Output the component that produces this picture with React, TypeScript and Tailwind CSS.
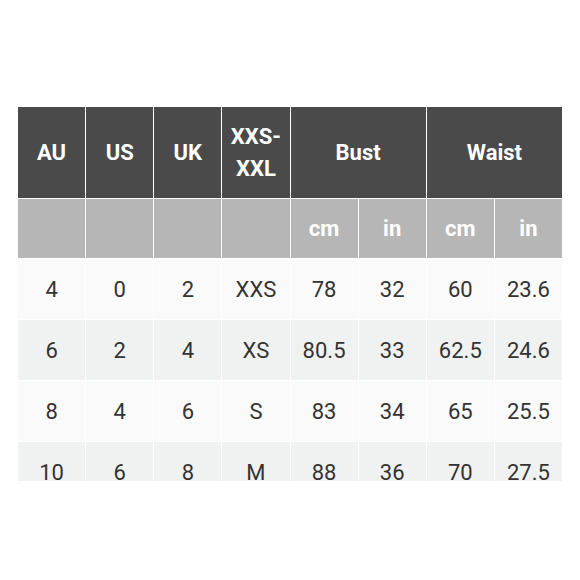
import React from 'react';

const rows = [
  ['4', '0', '2', 'XXS', '78', '32', '60', '23.6'],
  ['6', '2', '4', 'XS', '80.5', '33', '62.5', '24.6'],
  ['8', '4', '6', 'S', '83', '34', '65', '25.5'],
  ['10', '6', '8', 'M', '88', '36', '70', '27.5'],
];

const App = () => {
  return (
    <div className="w-[580px] h-[580px] bg-white pt-[106px] pl-[17px]" style={{ fontFamily: 'Roboto, "Liberation Sans", sans-serif' }}>
      <div className="w-[546px] h-[375px] overflow-hidden">
        <table className="w-[546px] table-fixed border-collapse text-center text-[22px]">
          <thead>
            <tr className="h-[92px] bg-[#4a4a4a] text-white font-bold">
              <th className="border border-white">AU</th>
              <th className="border border-white">US</th>
              <th className="border border-white">UK</th>
              <th className="border border-white leading-[32px]">
                XXS-
                <br />
                XXL
              </th>
              <th colSpan={2} className="border border-white">Bust</th>
              <th colSpan={2} className="border border-white">Waist</th>
            </tr>
            <tr className="h-[60px] bg-[#b6b6b6] text-white font-bold">
              <th className="border border-white"></th>
              <th className="border border-white"></th>
              <th className="border border-white"></th>
              <th className="border border-white"></th>
              <th className="border border-white">cm</th>
              <th className="border border-white">in</th>
              <th className="border border-white">cm</th>
              <th className="border border-white">in</th>
            </tr>
          </thead>
          <tbody className="text-[#333333]">
            {rows.map((row, index) => (
              <tr key={index} className={`h-[61px] ${index % 2 === 0 ? 'bg-[#fafafa]' : 'bg-[#f0f2f2]'}`}>
                {row.map((cell, cellIndex) => (
                  <td key={cellIndex} className="border border-white p-0">
                    {cell}
                  </td>
                ))}
              </tr>
            ))}
          </tbody>
        </table>
      </div>
    </div>
  );
};

export default App;
